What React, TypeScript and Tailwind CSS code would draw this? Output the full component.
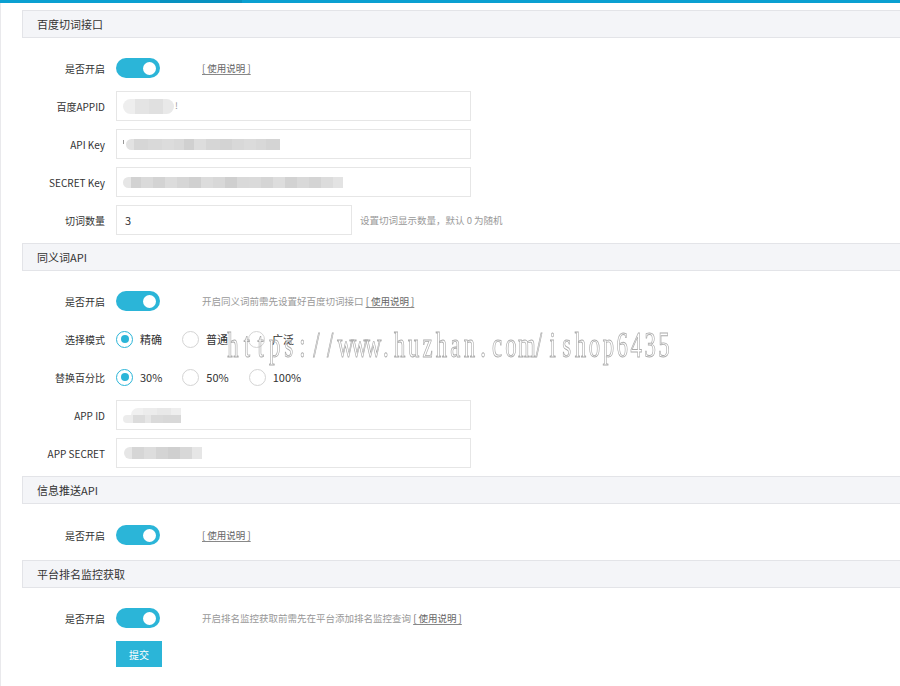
import React from "react";

const ACCENT = "bg-[#2bb5d8]";

type Seg = [number, string];

// Pixelated placeholder for masked credential values
function Masked({ segs, h = 11, className = "" }: { segs: Seg[]; h?: number; className?: string }) {
  return (
    <div className={`flex overflow-hidden rounded-l-full blur-[0.6px] ${className}`} style={{ height: h }}>
      {segs.map(([w, c], i) => (
        <div key={i} style={{ width: w, background: c }} />
      ))}
    </div>
  );
}

function Toggle() {
  return (
    <div className={`relative h-[20px] w-[44px] rounded-full ${ACCENT}`}>
      <div className="absolute right-[4px] top-[3.5px] h-[13px] w-[13px] rounded-full bg-white" />
    </div>
  );
}

function Radio({ checked, label }: { checked?: boolean; label: string }) {
  return (
    <div className="flex items-center gap-[7px]">
      <span
        className={`flex h-[17px] w-[17px] items-center justify-center rounded-full border ${
          checked ? "border-[#2bb5d8]" : "border-[#d4d4d4]"
        }`}
      >
        {checked && <span className="h-[8px] w-[8px] rounded-full bg-[#2bb5d8]" />}
      </span>
      <span className="text-[11px] text-[#333]">{label}</span>
    </div>
  );
}

function Header({ title }: { title: string }) {
  return (
    <div className="flex h-[28px] items-center border border-r-0 border-[#e3e4e8] bg-[#f4f5f8] pl-[14px] text-[11px] text-[#333]">
      {title}
    </div>
  );
}

function Row({ label, children }: { label: string; children: React.ReactNode }) {
  return (
    <div className="flex h-[30px] items-center">
      <div className="w-[83px] text-right text-[10px] text-[#333]">{label}</div>
      <div className="ml-[11px] flex items-center">{children}</div>
    </div>
  );
}

function Field({ w = 355, children }: { w?: number; children?: React.ReactNode }) {
  return (
    <div
      className="flex h-[30px] items-center border border-[#e6e6e6] bg-white pl-[6px] text-[11px] text-[#333]"
      style={{ width: w }}
    >
      {children}
    </div>
  );
}

function Help() {
  return <span className="underline decoration-[#888] underline-offset-2">[ 使用说明 ]</span>;
}

function Note({ children }: { children: React.ReactNode }) {
  return <div className="ml-[42px] text-[9.5px] text-[#999]">{children}</div>;
}

const MARK = "https://www.huzhan.com/ishop6435";

export default function App() {
  return (
    <div className="relative h-[686px] w-[900px] overflow-hidden bg-white font-['Noto_Sans_CJK_SC','Noto_Sans',sans-serif]">
      <div className="flex h-[3px]">
        <div className="w-[160px] bg-[#0aa0d1]" />
        <div className="w-[82px] bg-[#0892c0]" />
        <div className="flex-1 bg-[#0aa0d1]" />
      </div>

      <div className="h-[683px] border-l border-[#e9e9ec] pl-[21px] pt-[7px]">
        {/* 百度切词接口 */}
        <Header title="百度切词接口" />
        <div className="flex flex-col gap-2 pb-2 pt-[15px]">
          <Row label="是否开启">
            <Toggle />
            <div className="ml-[42px] text-[9.5px] text-[#666]">
              <Help />
            </div>
          </Row>
          <Row label="百度APPID">
            <Field>
              <Masked
                h={15}
                className="rounded-full"
                segs={[
                  [12, "#eeeeee"],
                  [14, "#e4e4e4"],
                  [14, "#e0e0e0"],
                  [11, "#e9e9e9"],
                ]}
              />
              <span className="ml-[1px] text-[9px] text-[#999]">!</span>
            </Field>
          </Row>
          <Row label="API Key">
            <Field>
              <span className="mr-[2px] mt-[10px] h-[4px] w-[1px] self-start bg-[#999]" />
              <Masked
                segs={[
                  [8, "#e2e2e2"],
                  [14, "#d6d6d6"],
                  [14, "#d9d9d9"],
                  [12, "#dcdcdc"],
                  [10, "#d9d9d9"],
                  [10, "#d0d0d0"],
                  [12, "#dddddd"],
                  [14, "#d6d6d6"],
                  [12, "#d3d3d3"],
                  [12, "#d8d8d8"],
                  [12, "#dbdbdb"],
                  [10, "#d8d8d8"],
                  [14, "#d4d4d4"],
                ]}
              />
            </Field>
          </Row>
          <Row label="SECRET Key">
            <Field>
              <Masked
                segs={[
                  [8, "#e6e6e6"],
                  [10, "#d2d2d2"],
                  [12, "#dadada"],
                  [12, "#d3d3d3"],
                  [12, "#dcdcdc"],
                  [12, "#d6d6d6"],
                  [12, "#d0d0d0"],
                  [12, "#dcdcdc"],
                  [12, "#d8d8d8"],
                  [12, "#cfcfcf"],
                  [12, "#d9d9d9"],
                  [12, "#dadada"],
                  [12, "#d5d5d5"],
                  [12, "#dddddd"],
                  [12, "#d2d2d2"],
                  [12, "#d9d9d9"],
                  [12, "#d4d4d4"],
                  [12, "#dcdcdc"],
                  [10, "#e3e3e3"],
                ]}
              />
            </Field>
          </Row>
          <Row label="切词数量">
            <Field w={236}>
              <span className="ml-[2px]">3</span>
            </Field>
            <div className="ml-[8px] text-[9.5px] text-[#999]">设置切词显示数量，默认 0 为随机</div>
          </Row>
        </div>

        {/* 同义词API */}
        <Header title="同义词API" />
        <div className="flex flex-col gap-2 pb-2 pt-[15px]">
          <Row label="是否开启">
            <Toggle />
            <Note>
              开启同义词前需先设置好百度切词接口 <span className="text-[#666]"><Help /></span>
            </Note>
          </Row>
          <Row label="选择模式">
            <div className="flex items-center gap-[20px]">
              <Radio checked label="精确" />
              <Radio label="普通" />
              <Radio label="广泛" />
            </div>
          </Row>
          <Row label="替换百分比">
            <div className="flex items-center gap-[20px]">
              <Radio checked label="30%" />
              <Radio label="50%" />
              <Radio label="100%" />
            </div>
          </Row>
          <Row label="APP ID">
            <Field>
              <div className="flex flex-col blur-[0.6px]">
                <div className="ml-[8px] flex h-[7px]">
                  <div className="w-[12px] rounded-tl-full bg-[#f0f0f0]" />
                  <div className="w-[14px] bg-[#ececec]" />
                  <div className="w-[14px] bg-[#e8e8e8]" />
                  <div className="w-[10px] bg-[#eeeeee]" />
                </div>
                <div className="flex h-[8px]">
                  <div className="w-[10px] rounded-l-full bg-[#ececec]" />
                  <div className="w-[12px] bg-[#dcdcdc]" />
                  <div className="w-[6px] bg-[#e6e6e6]" />
                  <div className="w-[12px] bg-[#dadada]" />
                  <div className="w-[18px] bg-[#d8d8d8]" />
                </div>
              </div>
            </Field>
          </Row>
          <Row label="APP SECRET">
            <Field>
              <Masked
                h={12}
                className="ml-[1px]"
                segs={[
                  [8, "#e6e6e6"],
                  [12, "#d6d6d6"],
                  [12, "#dddddd"],
                  [12, "#d4d4d4"],
                  [12, "#cfcfcf"],
                  [12, "#d8d8d8"],
                  [10, "#e6e6e6"],
                ]}
              />
            </Field>
          </Row>
        </div>

        {/* 信息推送API */}
        <Header title="信息推送API" />
        <div className="flex flex-col gap-2 pb-[10px] pt-[16px]">
          <Row label="是否开启">
            <Toggle />
            <div className="ml-[42px] text-[9.5px] text-[#666]">
              <Help />
            </div>
          </Row>
        </div>

        {/* 平台排名监控获取 */}
        <Header title="平台排名监控获取" />
        <div className="flex flex-col gap-2 pt-[15px]">
          <Row label="是否开启">
            <Toggle />
            <Note>
              开启排名监控获取前需先在平台添加排名监控查询 <span className="text-[#666]"><Help /></span>
            </Note>
          </Row>
          <div className="flex">
            <div className="w-[83px]" />
            <button
              className={`ml-[11px] flex h-[26px] w-[46px] items-center justify-center text-[10px] text-white ${ACCENT}`}
            >
              提交
            </button>
          </div>
        </div>
      </div>

      {/* outlined site mark, fixed-pitch serif glyphs */}
      <div className="pointer-events-none absolute left-[226px] top-[328px] flex origin-left scale-x-[0.65] whitespace-nowrap font-['Liberation_Serif',serif] text-[35px] leading-none text-transparent [-webkit-text-stroke:0.9px_#acacac]">
        {MARK.split("").map((ch, i) => (
          <span key={i} className="inline-block w-[21.4px] text-center">
            {ch}
          </span>
        ))}
      </div>
    </div>
  );
}
